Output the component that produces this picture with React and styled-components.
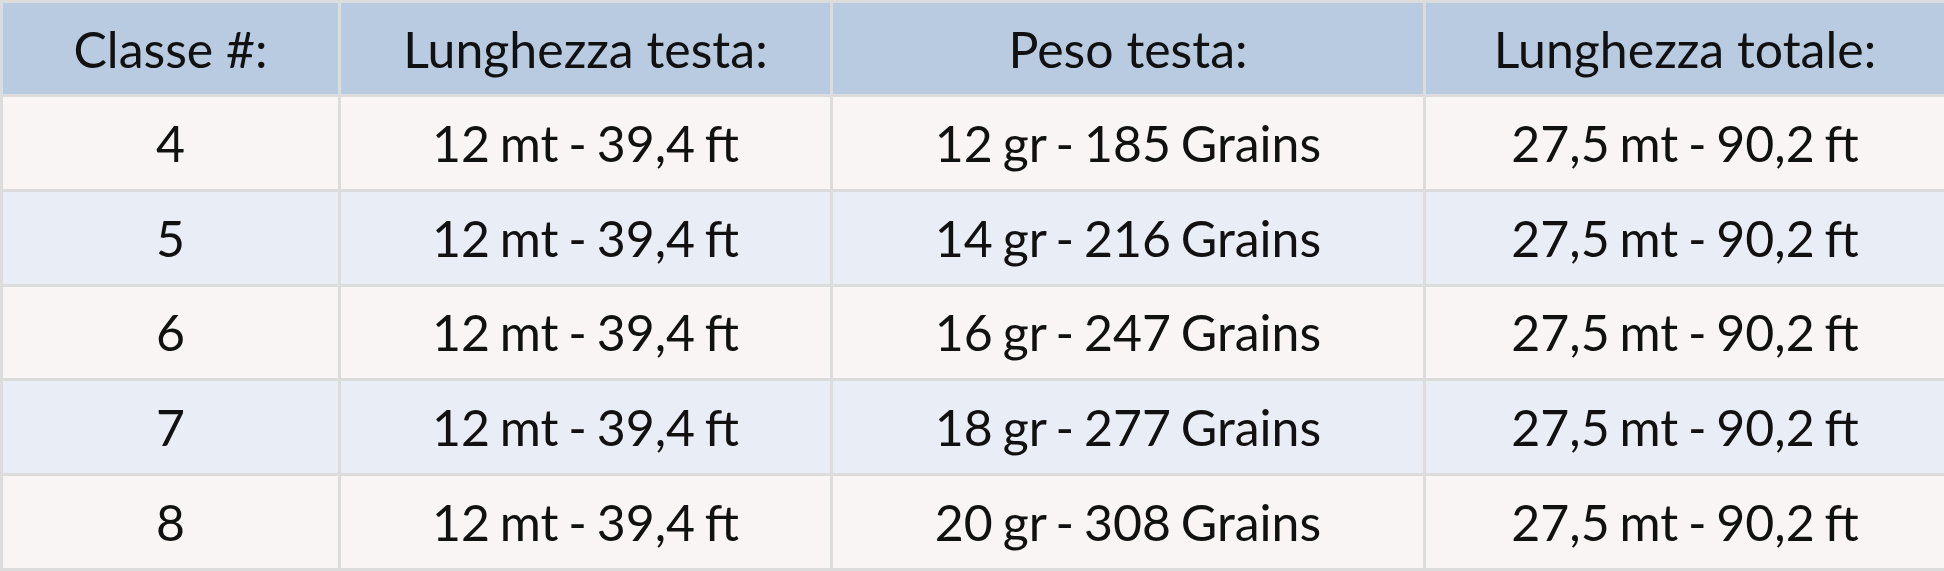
import React from 'react'
import styled, {createGlobalStyle} from 'styled-components'

const Global = createGlobalStyle`
    html, body {
        margin : 0;
        padding : 0;
        background : #ffffff;
    }
`
const Table = styled.table`
    width : 1944px;
    height : 571px;
    border-collapse : collapse;
    table-layout : fixed;
    font-family : Lato, "Open Sans", sans-serif;
    font-size : 50px;
    color : #111111;
`
const Head = styled.th`
    background : #b8cbe0;
    font-weight : 400;
    border : 3px solid #dcdcdc;
    text-align : center;
    padding : 0;
    height : 91px;
`
const Row = styled.tr`
    background : ${props => props.even ? '#e8edf6' : '#f9f5f5'};
`
const Cell = styled.td`
    border : 3px solid #dcdcdc;
    text-align : center;
    padding : 0;
    height : 91px;
    word-spacing : -3px;
`

const columns = [
    {title : 'Classe #:', width : 338},
    {title : 'Lunghezza testa:', width : 492},
    {title : 'Peso testa:', width : 593},
    {title : 'Lunghezza totale:', width : 521},
]

const rows = [
    ['4', '12 mt - 39,4 ft', '12 gr - 185 Grains', '27,5 mt - 90,2 ft'],
    ['5', '12 mt - 39,4 ft', '14 gr - 216 Grains', '27,5 mt - 90,2 ft'],
    ['6', '12 mt - 39,4 ft', '16 gr - 247 Grains', '27,5 mt - 90,2 ft'],
    ['7', '12 mt - 39,4 ft', '18 gr - 277 Grains', '27,5 mt - 90,2 ft'],
    ['8', '12 mt - 39,4 ft', '20 gr - 308 Grains', '27,5 mt - 90,2 ft'],
]

function App(){
    return (
        <>
            <Global/>
            <Table>
                <colgroup>
                    {columns.map(col => <col key={col.title} style={{width : col.width}}/>)}
                </colgroup>
                <thead>
                    <tr>
                        {columns.map(col => <Head key={col.title}>{col.title}</Head>)}
                    </tr>
                </thead>
                <tbody>
                    {rows.map((row, index) =>
                        <Row key={index} even={index % 2 === 1}>
                            {row.map((value, i) => <Cell key={i}>{value}</Cell>)}
                        </Row>)}
                </tbody>
            </Table>
        </>
    )
}

export default App
